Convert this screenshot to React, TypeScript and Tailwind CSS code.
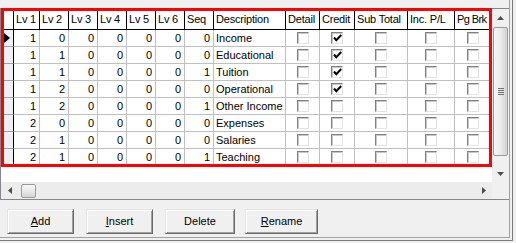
import React from "react";

type Row = {
  lv: number[];
  seq: number;
  desc: string;
  credit: boolean;
};

const rows: Row[] = [
  { lv: [1, 0, 0, 0, 0, 0], seq: 0, desc: "Income", credit: true },
  { lv: [1, 1, 0, 0, 0, 0], seq: 0, desc: "Educational", credit: true },
  { lv: [1, 1, 0, 0, 0, 0], seq: 1, desc: "Tuition", credit: true },
  { lv: [1, 2, 0, 0, 0, 0], seq: 0, desc: "Operational", credit: true },
  { lv: [1, 2, 0, 0, 0, 0], seq: 1, desc: "Other Income", credit: false },
  { lv: [2, 0, 0, 0, 0, 0], seq: 0, desc: "Expenses", credit: false },
  { lv: [2, 1, 0, 0, 0, 0], seq: 0, desc: "Salaries", credit: false },
  { lv: [2, 1, 0, 0, 0, 0], seq: 1, desc: "Teaching", credit: false },
];

// widths include the 1px right grid line
const numCols = [
  { label: "Lv 1", w: "w-[26px]" },
  { label: "Lv 2", w: "w-[29px]" },
  { label: "Lv 3", w: "w-[29px]" },
  { label: "Lv 4", w: "w-[29px]" },
  { label: "Lv 5", w: "w-[29px]" },
  { label: "Lv 6", w: "w-[29px]" },
];

const boolCols = [
  { label: "Detail", w: "w-[34px]", fit: "tracking-[-0.2px]" },
  { label: "Credit", w: "w-[35px]", fit: "tracking-[-0.2px]" },
  { label: "Sub Total", w: "w-[53px]", fit: "tracking-[-0.2px]" },
  { label: "Inc. P/L", w: "w-[47px]", fit: "tracking-[-0.2px]" },
  { label: "Pg Brk", w: "w-[36px]", fit: "tracking-[-0.6px]" },
];

function Check({ on }: { on: boolean }) {
  return (
    <span className="relative block h-[12px] w-[12px] border border-b-[#e3e3e3] border-l-[#808080] border-r-[#e3e3e3] border-t-[#808080] bg-white shadow-[inset_1px_1px_0_#c8c8c8]">
      {on && (
        <svg
          className="absolute left-[1px] top-[1px]"
          width="9"
          height="8"
          viewBox="0 0 9 8"
        >
          <path d="M1 3.5 L3.3 6.2 L8.2 1" fill="none" stroke="#000" strokeWidth="2" />
        </svg>
      )}
    </span>
  );
}

function HeaderCell({ w, label, fit = "tracking-[-0.2px]" }: { w: string; label: string; fit?: string }) {
  return (
    <div className={`${w} ${fit} flex h-full shrink-0 items-center overflow-hidden whitespace-nowrap border-r border-black pl-[2px]`}>
      {label}
    </div>
  );
}

function Arrow({ dir }: { dir: "up" | "down" | "left" | "right" }) {
  const d = {
    up: "M0 4 L3.5 0 L7 4 Z",
    down: "M0 0 L3.5 4 L7 0 Z",
    left: "M4 0 L0 3.5 L4 7 Z",
    right: "M0 0 L4 3.5 L0 7 Z",
  }[dir];
  const vert = dir === "up" || dir === "down";
  return (
    <svg width={vert ? 7 : 4} height={vert ? 4 : 7} viewBox={vert ? "0 0 7 4" : "0 0 4 7"}>
      <path d={d} fill="#4d4d4d" />
    </svg>
  );
}

function Grid() {
  return (
    <div className="flex h-[192px] w-[509px] shrink-0 flex-col border-b border-l border-t border-[#828790] bg-white">
      <div className="flex h-[173px]">
        <div className="w-[491px] bg-white">
          <div className="flex h-[21px] border-b border-black">
            <div className="h-full w-[13px] shrink-0 border-r border-black" />
            {numCols.map((c) => (
              <HeaderCell key={c.label} w={c.w} label={c.label} />
            ))}
            <HeaderCell w="w-[29px]" label="Seq" />
            <HeaderCell w="w-[72px]" label="Description" />
            {boolCols.map((c) => (
              <HeaderCell key={c.label} w={c.w} label={c.label} fit={c.fit} />
            ))}
          </div>
          {rows.map((r, i) => (
            <div key={i} className="flex h-[17px]">
              <div className="flex h-full w-[13px] shrink-0 items-center border-b border-r border-b-[#a0a0a0] border-r-black bg-[#f0f0f0] pl-[3px]">
                {i === 0 && (
                  <svg width="6" height="10" viewBox="0 0 6 10">
                    <path d="M0 0 L6 5 L0 10 Z" fill="#000" />
                  </svg>
                )}
              </div>
              {r.lv.map((v, j) => (
                <div
                  key={j}
                  className={`${numCols[j].w} flex h-full shrink-0 items-center justify-end border-b border-r border-[#c0c0c0] pr-[3px]`}
                >
                  {v}
                </div>
              ))}
              <div className="flex h-full w-[29px] shrink-0 items-center justify-end border-b border-r border-[#c0c0c0] pr-[3px]">
                {r.seq}
              </div>
              <div className="flex h-full w-[72px] shrink-0 items-center whitespace-nowrap border-b border-r border-[#c0c0c0] pl-[2px]">
                {r.desc}
              </div>
              {boolCols.map((c) => (
                <div
                  key={c.label}
                  className={`${c.w} flex h-full shrink-0 items-center justify-center border-b border-r border-[#c0c0c0]`}
                >
                  <Check on={c.label === "Credit" && r.credit} />
                </div>
              ))}
            </div>
          ))}
        </div>
        {/* vertical scrollbar */}
        <div className="flex w-[17px] shrink-0 flex-col bg-[#f0f0f0]">
          <div className="flex h-[17px] items-center justify-center">
            <Arrow dir="up" />
          </div>
          <div className="flex-1 px-[1px] pt-[1px]">
            <div className="flex h-[129px] flex-col items-center justify-center gap-[1px] rounded-[2px] border border-[#9b9b9b] bg-gradient-to-r from-[#f7f7f7] via-[#ebebeb] to-[#d2d2d2]">
              <span className="block h-[1px] w-[6px] bg-[#6e6e6e]" />
              <span className="block h-[1px] w-[6px] bg-[#6e6e6e]" />
              <span className="block h-[1px] w-[6px] bg-[#6e6e6e]" />
              <span className="block h-[1px] w-[6px] bg-[#6e6e6e]" />
            </div>
          </div>
          <div className="flex h-[17px] items-center justify-center">
            <Arrow dir="down" />
          </div>
        </div>
      </div>
      {/* horizontal scrollbar */}
      <div className="flex h-[17px]">
        <div className="flex w-[491px] items-center bg-[#ececec]">
          <div className="flex h-full w-[17px] items-center justify-center">
            <Arrow dir="left" />
          </div>
          <div className="ml-[3px] h-[14px] w-[15px] rounded-[2px] border border-[#9b9b9b] bg-gradient-to-b from-[#f7f7f7] via-[#ebebeb] to-[#d2d2d2]" />
          <div className="flex-1" />
          <div className="flex h-full w-[17px] items-center justify-center">
            <Arrow dir="right" />
          </div>
        </div>
        <div className="w-[17px] bg-[#f0f0f0]" />
      </div>
    </div>
  );
}

function Btn({ w, ml, children }: { w: string; ml: string; children: React.ReactNode }) {
  return (
    <button
      type="button"
      className={`${w} ${ml} flex h-[25px] shrink-0 items-center justify-center border border-b-[#696969] border-l-[#e3e3e3] border-r-[#696969] border-t-[#e3e3e3] bg-[#f0f0f0] text-black shadow-[inset_1px_1px_0_#ffffff,inset_-1px_-1px_0_#a0a0a0]`}
    >
      {children}
    </button>
  );
}

export default function App() {
  return (
    <div className="h-[243px] w-[516px] overflow-hidden bg-[#f0f0f0] font-['Liberation_Sans',Arial,sans-serif] text-[11px] leading-none text-black">
      <div className="h-[241px] w-[513px] border-b border-r border-[#7a7a7a]">
        <div className="relative flex h-[238px] w-[510px] flex-col border-b border-r border-[#a0a0a0] pt-[8px]">
          <Grid />
          <div className="mt-[9px] flex h-[25px]">
            <Btn w="w-[67px]" ml="ml-[7px]">
              <span className="underline">A</span>dd
            </Btn>
            <Btn w="w-[67px]" ml="ml-[12px]">
              <span className="underline">I</span>nsert
            </Btn>
            <Btn w="w-[70px]" ml="ml-[12px]">
              Delete
            </Btn>
            <Btn w="w-[73px]" ml="ml-[10px]">
              <span className="underline">R</span>ename
            </Btn>
          </div>
          {/* red highlight drawn over the grid */}
          <div className="pointer-events-none absolute left-[1px] top-[8px] h-[159px] w-[491px] border-[3px] border-[#ff0000]" />
        </div>
      </div>
    </div>
  );
}
